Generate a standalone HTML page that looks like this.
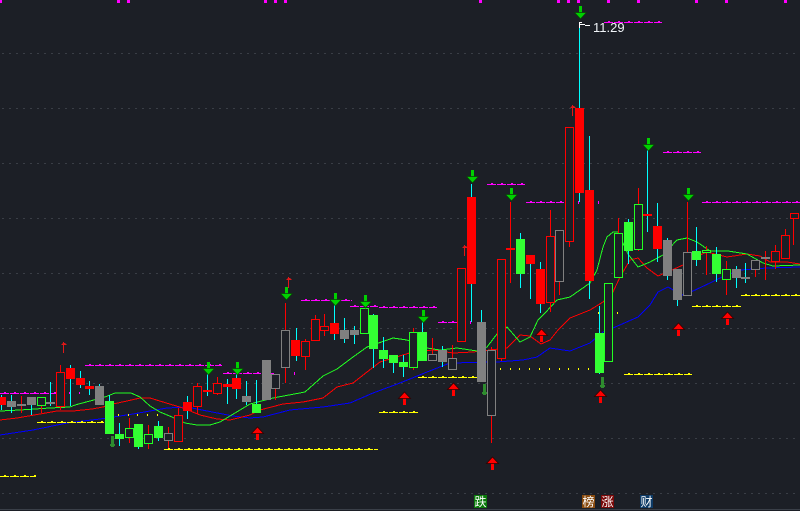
<!DOCTYPE html>
<html lang="zh">
<head>
<meta charset="utf-8">
<title>K线图</title>
<style>
html,body{margin:0;padding:0;background:#1c1f26;width:800px;height:511px;overflow:hidden}
svg{display:block;position:absolute;left:0;top:0}
.lab{position:absolute;top:495px;width:13px;height:13px;color:#fff;font:12px/13px "WenQuanYi Zen Hei","Noto Sans CJK SC",sans-serif;text-align:center}
.val{position:absolute;left:593px;top:20px;color:#f0f4f8;font:13px/15px "Liberation Sans",sans-serif}
</style>
</head>
<body>
<svg width="800" height="511" viewBox="0 0 800 511" shape-rendering="crispEdges">
<defs>
<g id="dn"><path d="M-1 0h3v7h-3z" fill="#00d000"/><path d="M-5.5 6.5H6.5L.5 13z" fill="#00d000" stroke="#0b3d0b" stroke-width=".8" shape-rendering="auto"/></g>
<g id="up"><path d="M-1 6h3v7h-3z" fill="#f00"/><path d="M.5 0L6.5 6.5H-5.5z" fill="#f00" stroke="#300" stroke-width=".8" shape-rendering="auto"/></g>
<g id="sd"><path d="M-1 0h3v9h-3z" fill="#2e8b2e"/><path d="M-2 8h5v2h-1v1h-3v-1h-1z" fill="#2e8b2e"/></g>
<path id="su" d="M.5 0V11M-1.5 2.5H3.5M-.5 1.5H2.5" fill="none" stroke="#e01818" stroke-width="1"/>
</defs>

<g stroke="#3a3e46" stroke-width="1" stroke-dasharray="2 5" fill="none">
<path d="M2 53.5H800M2 108.5H800M2 163.5H800M2 218.5H800M2 273.5H800M2 328.5H800M2 383.5H800M2 438.5H800M2 493.5H800"/>
</g>
<path d="M0 509.5H800" stroke="#3a3f48" stroke-width="1"/>

<!-- top markers -->
<path fill="#f0f" d="M0 0h2v3h-2zM117 0h3v3h-3zM127 0h3v3h-3zM264 0h3v3h-3zM274 0h3v3h-3zM284 0h3v3h-3zM479 0h3v3h-3zM557 0h3v3h-3zM567 0h3v3h-3zM577 0h3v3h-3zM607 0h3v3h-3zM637 0h3v3h-3zM695 0h3v3h-3zM725 0h3v3h-3zM784 0h3v3h-3z"/>

<!-- moving averages -->
<g fill="none" stroke-width="1">
<path stroke="#00f" d="M0 435L33 430L67 423L100 419L133 414L167 408L187 407L207 411L233 416L250 418L263 417L290 410L323 407L350 403L373 393L400 383L427 372L450 363L497 362L523 360L537 357L550 348L570 351L590 343L603 332L613 328L638 317L650 305L658 292L668 287L682 295L693 291L710 283L722 277L740 270L767 268L800 267"/>
<path stroke="#f00" d="M0 420L17 418L40 414L57 411L73 411L92 409L103 407L113 404L127 401L140 398L150 398L163 402L183 408L200 415L217 419L230 420L250 415L260 410L283 404L303 402L323 398L337 387L353 383L367 372L380 362L403 355L413 352L433 350L453 353L473 352L507 348L520 335L530 336L541 344L550 340L558 330L570 318L590 310L603 302L613 292L620 277L630 260L638 258L647 268L658 276L672 270L683 265L693 258L707 252L727 257L747 254L760 256L770 262L787 262L800 264"/>
<path stroke="#2f2" d="M0 411L20 410L50 408L70 407L75 405L90 401L105 397L115 393L131 393L140 397L150 406L160 412L172 417L185 423L197 425L210 425L220 422L235 413L250 404L273 398L305 392L323 376L337 369L353 357L367 347L393 338L407 340L427 348L440 350L457 348L477 351L487 347L497 334L507 327L520 342L530 337L538 320L545 313L557 300L570 297L590 283L597 270L603 247L607 237L613 232L618 232L628 254L638 267L650 262L663 255L677 240L687 238L697 242L710 251L728 251L747 254L763 263L773 266L800 265"/>
</g>

<!-- magenta levels -->
<g fill="none" stroke="#f0f" stroke-width="1">
<g stroke-dasharray="9 1">
<path d="M0 393.5H56M85 365.5H222M223 373.5H261M301 300.5H352M350 306.5H378M379 307.5H437M438 322.5H458M487 184.5H525M526 202.5H564M604 22.5H662M663 152.5H701M702 202.5H800"/>
</g>
<g stroke-dasharray="2 8">
<path d="M4 392.5H56M89 364.5H222M227 372.5H261M305 299.5H352M354 305.5H378M383 306.5H437M442 321.5H458M491 183.5H525M530 201.5H564M608 21.5H662M667 151.5H701M706 201.5H800"/>
</g>
</g>
<path fill="#f0f" d="M69 392h1v2h-1zM79 392h1v2h-1zM271 373h3v1h-3zM294 372h1v3h-1zM470 321h1v3h-1zM578 201h1v3h-1zM598 201h1v3h-1z"/>

<!-- yellow levels -->
<g fill="none" stroke="#ff0" stroke-width="1">
<g stroke-dasharray="9 1">
<path d="M0 476.5H36M37 422.5H104M164 449.5H378M379 412.5H418M418 377.5H477M624 374.5H692M692 306.5H741M741 295.5H800"/>
</g>
<g stroke-dasharray="2 8">
<path d="M4 475.5H36M41 421.5H104M168 448.5H378M383 411.5H418M422 376.5H477M628 373.5H692M696 305.5H741M745 294.5H800"/>
</g>
</g>
<path fill="#ff0" d="M118 414h1v2h-1zM128 414h1v2h-1zM137 414h1v2h-1zM147 414h1v2h-1zM157 414h1v2h-1zM500 368h1v2h-1zM510 368h1v2h-1zM519 368h1v2h-1zM529 368h1v2h-1zM539 368h1v2h-1zM549 368h1v2h-1zM559 368h1v2h-1zM568 368h1v2h-1zM578 368h1v2h-1zM588 368h1v2h-1zM598 312h1v2h-1zM617 312h1v2h-1z"/>

<!-- wicks -->
<path fill="none" stroke="#f00" stroke-width="1" d="M21.5 396V413M41.5 406V413M60.5 365V410M129.5 418V443M148.5 425V449M168.5 427V448M178.5 408V415M197.5 383V414M217.5 377V395M275.5 389V400M285.5 303V383M305.5 339V370M315.5 315V341M324.5 314V336M413.5 328V370M432.5 338V354M452.5 345V358M491.5 347V443M501.5 359V361M510.5 202V283M550.5 210V312M559.5 282V295M569.5 242V247M618.5 218V233M638.5 188V251M687.5 202V252M706.5 246V275M726.5 261V295M755.5 270V277M765.5 251V280M775.5 245V269M785.5 229V235M793.5 219V245"/>
<path fill="none" stroke="#0ff" stroke-width="1" d="M1.5 395V410M11.5 395V413M31.5 404V415M50.5 382V406M70.5 365V406M80.5 371V388M89.5 381V395M99.5 384V400M109.5 395V401M119.5 423V446M138.5 424V449M158.5 421V441M187.5 396V419M207.5 373V396M227.5 379V404M236.5 372V399M246.5 381V405M256.5 380V404M296.5 328V361M334.5 305V340M344.5 318V343M354.5 326V344M373.5 314V368M383.5 337V368M393.5 363V373M403.5 355V377M422.5 322V332M442.5 346V367M471.5 184V322M481.5 310V322M520.5 233V288M530.5 263V299M540.5 262V313M579.5 24V202M589.5 136V299M599.5 306V374M628.5 219V264M647.5 142V232M657.5 203V262M667.5 238V280M677.5 300V306M696.5 227V266M716.5 247V282M736.5 266V288M745.5 263V283"/>

<!-- hollow bodies -->
<path fill="#1c1f26" stroke="#f00" stroke-width="1" d="M56.5 372.5h8v34h-8zM174.5 415.5h8v26h-8zM193.5 386.5h8v20h-8zM213.5 383.5h8v10h-8zM301.5 341.5h8v15h-8zM311.5 319.5h8v21h-8zM320.5 326.5h8v4h-8zM457.5 268.5h8v73h-8zM497.5 259.5h8v99h-8zM546.5 236.5h8v66h-8zM565.5 127.5h8v114h-8zM771.5 251.5h8v10h-8zM781.5 235.5h8v23h-8zM790.5 213.5h8v5h-8z"/>
<path fill="#1c1f26" stroke="#2f2" stroke-width="1" d="M37.5 397.5h8v8h-8zM125.5 428.5h8v9h-8zM144.5 434.5h8v9h-8zM360.5 308.5h8v25h-8zM409.5 332.5h8v35h-8zM604.5 283.5h8v78h-8zM614.5 233.5h8v44h-8zM634.5 204.5h8v45h-8zM702.5 250.5h8v2h-8zM722.5 269.5h8v10h-8z"/>
<path fill="#1c1f26" stroke="#808080" stroke-width="1" d="M164.5 433.5h8v7h-8zM271.5 374.5h8v14h-8zM281.5 330.5h8v37h-8zM428.5 354.5h8v6h-8zM448.5 358.5h8v11h-8zM487.5 350.5h8v65h-8zM555.5 230.5h8v51h-8zM683.5 252.5h8v43h-8zM751.5 260.5h8v9h-8zM761.5 257.5h8v1h-8z"/>

<!-- solid bodies -->
<path fill="#808080" d="M7 401h9v6h-9zM17 404h9v2h-9zM27 397h9v8h-9zM46 402h9v2h-9zM95 386h9v19h-9zM242 396h9v6h-9zM262 360h9v40h-9zM340 330h9v9h-9zM350 330h9v5h-9zM438 350h9v12h-9zM477 322h9v60h-9zM663 240h9v36h-9zM673 269h9v31h-9zM732 269h9v9h-9zM741 277h9v2h-9z"/>
<path fill="#f00" d="M0 397h6v8h-6zM66 368h9v11h-9zM76 378h9v7h-9zM85 386h9v3h-9zM183 402h9v9h-9zM203 390h9v2h-9zM223 384h9v3h-9zM232 378h9v11h-9zM291 340h9v16h-9zM330 323h9v11h-9zM467 197h9v87h-9zM506 248h9v2h-9zM526 255h9v9h-9zM536 269h9v35h-9zM575 108h9v85h-9zM585 190h9v91h-9zM643 214h9v2h-9zM653 226h9v23h-9z"/>
<path fill="#33ff33" d="M105 401h9v33h-9zM115 434h9v5h-9zM134 424h9v23h-9zM154 426h9v12h-9zM252 404h9v9h-9zM369 315h9v34h-9zM379 350h9v9h-9zM389 355h9v8h-9zM399 362h9v5h-9zM418 332h9v29h-9zM516 239h9v35h-9zM595 333h9v40h-9zM624 222h9v29h-9zM692 251h9v9h-9zM712 254h9v20h-9z"/>

<!-- arrows -->
<use href="#dn" x="208" y="362"/><use href="#dn" x="237" y="362"/><use href="#dn" x="286" y="287"/><use href="#dn" x="335" y="293"/><use href="#dn" x="365" y="295"/><use href="#dn" x="423" y="310"/><use href="#dn" x="472" y="170"/><use href="#dn" x="511" y="188"/><use href="#dn" x="580" y="6"/><use href="#dn" x="648" y="138"/><use href="#dn" x="688" y="188"/>
<use href="#up" x="257" y="427"/><use href="#up" x="404" y="392"/><use href="#up" x="453" y="383"/><use href="#up" x="541" y="329"/><use href="#up" x="600" y="390"/><use href="#up" x="492" y="457"/><use href="#up" x="678" y="323"/><use href="#up" x="727" y="312"/>
<use href="#sd" x="112" y="436"/><use href="#sd" x="484" y="384"/><use href="#sd" x="602" y="377"/>
<use href="#su" x="63" y="342"/><use href="#su" x="288" y="277"/><use href="#su" x="464" y="245"/><use href="#su" x="572" y="105"/>

<!-- peak leader -->
<path fill="none" stroke="#fff" stroke-width="1" d="M579.5 22V28M579.5 22.5H582M579.5 24.5H582M582 24.5H585M585 25.5H590"/>
</svg>

<div class="val">11.29</div>
<div class="lab" style="left:474px;background:#0a7a0a">跌</div>
<div class="lab" style="left:582px;background:#8a4c10">榜</div>
<div class="lab" style="left:601px;background:#7a0a0a">涨</div>
<div class="lab" style="left:640px;background:#0d3a66">财</div>
</body>
</html>
